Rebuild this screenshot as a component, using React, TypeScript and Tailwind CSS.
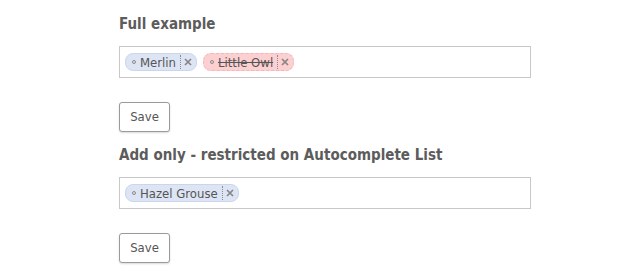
import React from "react";

const FONT = { fontFamily: 'Tahoma, "DejaVu Sans Condensed", "DejaVu Sans", sans-serif' };

function Tag({ label, invalid }: { label: string; invalid?: boolean }) {
  return (
    <span
      className={
        "inline-flex items-center h-[18px] rounded-[8px] border pl-[6px] pr-[4px] text-[13px] leading-none " +
        (invalid
          ? "bg-[#fccfd1] border-[#f5b5b9] border-dashed"
          : "bg-[#dde5f5] border-[#cbd6ee]")
      }
    >
      <span className="w-[4px] h-[4px] rounded-full border border-[#8a8a8a] mr-[4px]" />
      <span className={"text-[#555] " + (invalid ? "line-through" : "")}>{label}</span>
      <span className="h-[14px] border-l border-dotted border-[#8a8a8a] ml-[4px] mr-[3px]" />
      <svg width="8" height="8" viewBox="0 0 8 8">
        <path d="M1 1 L7 7 M7 1 L1 7" stroke="#858585" strokeWidth="1.7" />
      </svg>
    </span>
  );
}

function Section({ title, tags, first }: { title: string; tags: { label: string; invalid?: boolean }[]; first?: boolean }) {
  return (
    <div className={first ? "pt-[15px]" : "pt-[14px]"}>
      <h2 className="text-[15px] font-bold leading-[18px] text-[#5c5c5c]">{title}</h2>
      <div className="mt-[13px] w-[412px] h-[32px] border border-[#c8c8c8] flex items-center gap-[6px] pl-[5px]">
        {tags.map((t) => (
          <Tag key={t.label} label={t.label} invalid={t.invalid} />
        ))}
      </div>
      <button className="mt-[24px] w-[51px] h-[30px] border border-[#9a9a9a] rounded-[3px] bg-white text-[13px] text-[#555] shadow-[0_1px_2px_rgba(0,0,0,0.15)]">
        Save
      </button>
    </div>
  );
}

export default function App() {
  return (
    <div className="w-[639px] h-[277px] bg-white pl-[119px]" style={FONT}>
      <Section title="Full example" first tags={[{ label: "Merlin" }, { label: "Little Owl", invalid: true }]} />
      <Section title="Add only - restricted on Autocomplete List" tags={[{ label: "Hazel Grouse" }]} />
    </div>
  );
}
